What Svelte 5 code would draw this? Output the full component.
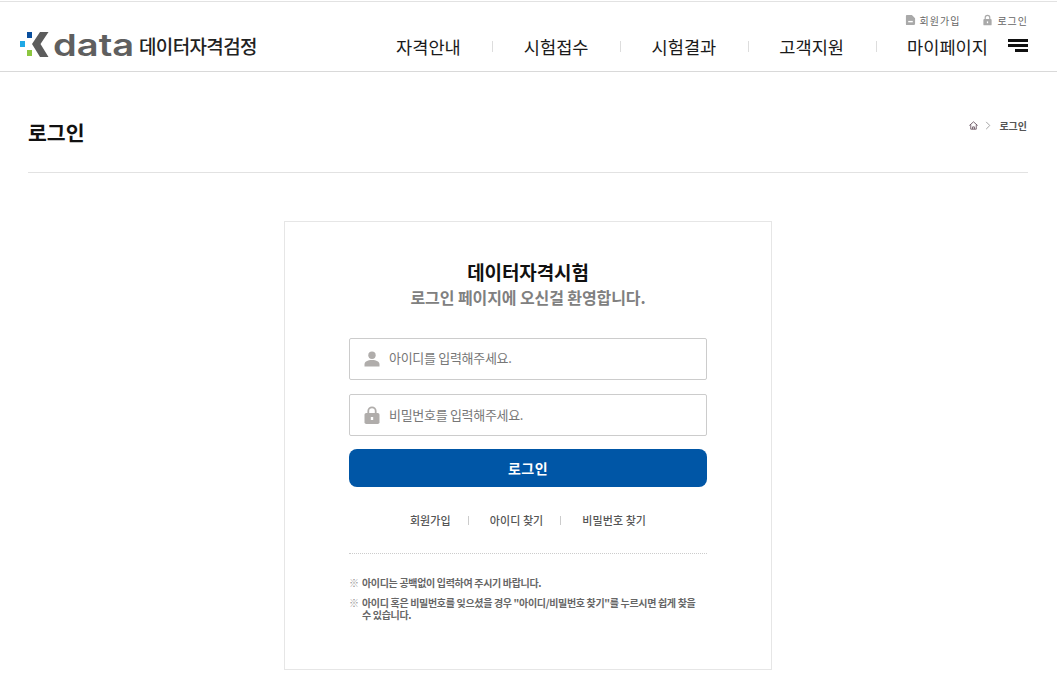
<script lang="ts">
	const nav = ['자격안내', '시험접수', '시험결과', '고객지원', '마이페이지'];
	const links = ['회원가입', '아이디 찾기', '비밀번호 찾기'];
</script>

<header class="header">
	<div class="top">
		<a class="util" href="#join">
			<svg viewBox="0 0 12 12" aria-hidden="true">
				<path d="M1 1.500a1 1 0 0 1 1-1h5.500l3.500 3.500v6a1.500 1.500 0 0 1-1.500 1.500h-7.500a1 1 0 0 1-1-1z" fill="#a9a9a9" />
				<path d="M3.500 7h5v1.500h-5z" fill="#fff" />
			</svg>
			회원가입
		</a>
		<a class="util" href="#login">
			<svg viewBox="0 0 12 12" aria-hidden="true">
				<path d="M3.500 5.500V3.500a2.500 2.500 0 0 1 5 0v2" fill="none" stroke="#a9a9a9" stroke-width="1.300" />
				<rect x="1.500" y="5" width="9" height="6.800" rx="1" fill="#a9a9a9" />
				<rect x="5.300" y="7.500" width="1.400" height="2" fill="#fff" />
			</svg>
			로그인
		</a>
	</div>
	<div class="main">
		<a class="logo" href="#home">
			<svg class="mark" viewBox="0 0 30 26" aria-hidden="true">
				<rect x="7" y="0" width="5" height="6" fill="#0a4f9e" />
				<rect x="0" y="9" width="5" height="6" fill="#1fa8e6" />
				<rect x="7" y="18" width="5" height="6" fill="#8cc63f" />
				<path d="M28.500 0h-8.500l-8 12 8 13h8.500l-8-13z" fill="#5c5c5c" />
			</svg>
			<span class="word">data</span>
			<span class="name">데이터자격검정</span>
		</a>
		<nav class="nav">
			{#each nav as item, i}
				{#if i > 0}<span class="sep"></span>{/if}
				<a href="#menu">{item}</a>
			{/each}
		</nav>
		<button class="burger" aria-label="전체메뉴">
			<span></span><span></span><span></span>
		</button>
	</div>
</header>

<main class="page">
	<div class="title-row">
		<h1>로그인</h1>
		<div class="crumb">
			<svg viewBox="0 0 12 12" aria-hidden="true">
				<path d="M1.500 6 6 2l4.500 4M3 5v5h6V5M5 10V7.500h2V10" fill="none" stroke="#6d5a66" stroke-width="1" />
			</svg>
			<svg class="chev" viewBox="0 0 8 10" aria-hidden="true">
				<path d="M2 1l4 4-4 4" fill="none" stroke="#999" stroke-width="1" />
			</svg>
			<b>로그인</b>
		</div>
	</div>

	<section class="card">
		<h2>데이터자격시험</h2>
		<p class="welcome">로그인 페이지에 오신걸 환영합니다.</p>

		<form class="form">
			<label class="field">
				<svg viewBox="0 0 16 16" aria-hidden="true">
					<circle cx="8" cy="4.200" r="3.700" fill="#b0adab" />
					<path d="M.5 15.500v-2c0-3 3-4.500 7.500-4.500s7.500 1.500 7.500 4.500v2z" fill="#b0adab" />
				</svg>
				<input type="text" placeholder="아이디를 입력해주세요." />
			</label>
			<label class="field pw">
				<svg viewBox="0 0 16 18" aria-hidden="true">
					<path d="M4.300 8V5a3.700 3.700 0 0 1 7.400 0v3" fill="none" stroke="#b0adab" stroke-width="1.800" />
					<rect x="0.500" y="7" width="15" height="11" rx="1.800" fill="#b0adab" />
					<rect x="6.800" y="11" width="2.400" height="3" fill="#fff" />
				</svg>
				<input type="password" placeholder="비밀번호를 입력해주세요." />
			</label>
			<button type="button" class="submit">로그인</button>
		</form>

		<div class="links">
			{#each links as link, i}
				{#if i > 0}<span class="bar"></span>{/if}
				<a href="#link">{link}</a>
			{/each}
		</div>

		<ul class="notes">
			<li>아이디는 공백없이 입력하여 주시기 바랍니다.</li>
			<li>아이디 혹은 비밀번호를 잊으셨을 경우 "아이디/비밀번호 찾기"를 누르시면 쉽게 찾을 수 있습니다.</li>
		</ul>
	</section>
</main>

<style>
	:global(body) {
		margin: 0;
		background: #fff;
		font-family: "Noto Sans CJK KR", "Noto Sans", sans-serif;
		color: #111;
	}
	a {
		color: inherit;
		text-decoration: none;
	}
	.header {
		height: 71px;
		margin-top: 1px;
		border-top: 1px solid #e2e2e2;
		border-bottom: 1px solid #d9d9d9;
		padding: 0 29px 0 20px;
		display: flex;
		flex-direction: column;
		box-sizing: border-box;
	}
	.top {
		display: flex;
		justify-content: flex-end;
		gap: 22px;
		height: 27px;
		padding-top: 10px;
		box-sizing: border-box;
	}
	.util {
		display: flex;
		align-items: center;
		gap: 4px;
		height: 16px;
		font-size: 10px;
		letter-spacing: 1px;
		color: #666;
	}
	.util svg {
		width: 11px;
		height: 12px;
	}
	.main {
		display: flex;
		align-items: center;
		height: 34px;
	}
	.logo {
		display: flex;
		align-items: center;
		margin-top: -2px;
	}
	.mark {
		width: 30px;
		height: 26px;
	}
	.word {
		font-family: Inter, sans-serif;
		font-weight: 600;
		font-size: 30px;
		line-height: 26px;
		width: 84px;
		color: #5f5f5f;
		margin-left: 3px;
		transform: scaleX(1.27);
		transform-origin: left;
	}
	.name {
		margin-left: 2px;
		font-size: 19px;
		font-weight: 500;
		letter-spacing: -0.65px;
		color: #222;
	}
	.nav {
		margin-left: auto;
		display: flex;
		align-items: center;
		font-size: 17.600px;
		font-weight: 400;
		color: #1a1a1a;
	}
	.nav a {
		white-space: nowrap;
	}
	.sep {
		width: 1px;
		height: 11px;
		background: #ddd;
		margin: 0 30.500px 0 31.500px;
	}
	.burger {
		margin-left: 20px;
		width: 20px;
		height: 13px;
		align-self: flex-start;
		margin-top: 10px;
		padding: 0;
		border: 0;
		background: none;
		display: flex;
		flex-direction: column;
		justify-content: space-between;
		align-items: flex-end;
	}
	.burger span {
		display: block;
		height: 3px;
		width: 100%;
		background: #111;
	}
	.burger span:nth-child(3) {
		width: 13px;
	}
	.page {
		padding: 0 29px 0 28px;
	}
	.title-row {
		height: 100px;
		border-bottom: 1px solid #e2e2e2;
		display: flex;
		justify-content: space-between;
		align-items: flex-start;
	}
	h1 {
		margin: 44px 0 0;
		font-size: 20.500px;
		line-height: 32px;
		font-weight: 700;
		color: #111;
	}
	.crumb {
		display: flex;
		align-items: center;
		gap: 5px;
		margin-top: 46px;
		margin-right: 1px;
		font-size: 10px;
		color: #555;
	}
	.crumb svg {
		width: 11px;
		height: 11px;
	}
	.crumb .chev {
		width: 8px;
		height: 9px;
	}
	.crumb b {
		margin-left: 2px;
	}
	.card {
		width: 488px;
		height: 449px;
		box-sizing: border-box;
		margin: 48px auto 0;
		border: 1px solid #e6e6e6;
		padding: 37px 64px 0;
		text-align: center;
	}
	h2 {
		margin: 0;
		font-size: 19px;
		line-height: 26px;
		font-weight: 700;
		letter-spacing: -0.1px;
		color: #111;
	}
	.welcome {
		margin: 0;
		font-size: 16px;
		line-height: 24px;
		font-weight: 700;
		letter-spacing: -0.1px;
		color: #808080;
	}
	.form {
		margin-top: 29px;
	}
	.field {
		display: flex;
		align-items: center;
		gap: 9px;
		height: 42px;
		box-sizing: border-box;
		border: 1px solid #ccc;
		border-radius: 2px;
		padding-left: 14px;
		margin-bottom: 14px;
	}
	.field svg {
		width: 16px;
		height: 16px;
		flex: none;
	}
	.field.pw svg {
		height: 18px;
	}
	input {
		flex: 1;
		min-width: 0;
		border: 0;
		outline: 0;
		padding: 0;
		margin-bottom: 3px;
		font: inherit;
		font-size: 13px;
		letter-spacing: -0.3px;
	}
	.pw input {
		margin-bottom: 1px;
	}
	input::placeholder {
		color: #777;
		opacity: 1;
	}
	.submit {
		display: block;
		width: 100%;
		height: 38px;
		margin-top: -1px;
		border: 0;
		border-radius: 8px;
		background: #0056a6;
		color: #fff;
		font: inherit;
		font-size: 14px;
		font-weight: 700;
		letter-spacing: 0.5px;
	}
	.links {
		display: flex;
		justify-content: center;
		align-items: center;
		height: 66px;
		border-bottom: 1px dotted #ccc;
		font-size: 11px;
		font-weight: 500;
		letter-spacing: 0.08px;
		color: #555;
	}
	.bar {
		width: 1px;
		height: 9px;
		background: #ccc;
		margin: 0 21px 0 17px;
	}
	.notes {
		list-style: none;
		margin: 23px 0 0;
		padding: 0;
		text-align: left;
		font-size: 10px;
		line-height: 12px;
		font-weight: 700;
		letter-spacing: -0.33px;
		color: #666;
	}
	.notes li {
		padding-left: 13px;
		padding-right: 5px;
		text-indent: -13px;
		margin-bottom: 8px;
	}
	.notes li::before {
		content: "※";
		display: inline-block;
		width: 13px;
		text-indent: 0;
		color: #999;
		font-weight: 400;
	}
</style>
